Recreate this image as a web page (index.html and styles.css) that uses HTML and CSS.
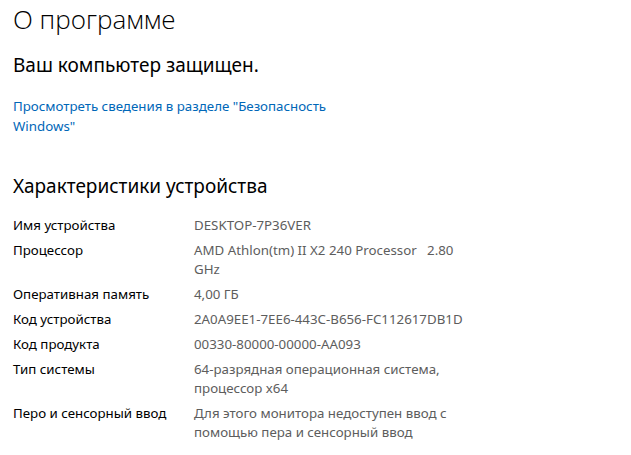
FILE: index.html
```html
<!DOCTYPE html>
<html lang="ru">
<head>
    <meta charset="UTF-8">
    <title>О программе</title>
    <link rel="stylesheet" href="styles.css">
</head>
<body>
    <div class="page">
        <h1>О программе</h1>
        <p class="status">Ваш компьютер защищен.</p>
        <a class="link" href="#">Просмотреть сведения в разделе "Безопасность Windows"</a>

        <h2>Характеристики устройства</h2>
        <dl class="specs">
            <dt>Имя устройства</dt>
            <dd>DESKTOP-7P36VER</dd>
            <dt>Процессор</dt>
            <dd>AMD Athlon(tm) II X2 240 Processor&nbsp;&nbsp;&nbsp;2.80 GHz</dd>
            <dt>Оперативная память</dt>
            <dd>4,00 ГБ</dd>
            <dt>Код устройства</dt>
            <dd class="nowrap">2A0A9EE1-7EE6-443C-B656-FC112617DB1D</dd>
            <dt>Код продукта</dt>
            <dd>00330-80000-00000-AA093</dd>
            <dt>Тип системы</dt>
            <dd>64-разрядная операционная система, процессор x64</dd>
            <dt>Перо и сенсорный ввод</dt>
            <dd>Для этого монитора недоступен ввод с помощью пера и сенсорный ввод</dd>
        </dl>
    </div>
</body>
</html>
```

FILE: styles.css
```css
/* Base */
body {
    font-family: "Noto Sans", "Open Sans", sans-serif;
    background-color: #ffffff;
    color: #000000;
    margin: 0;
    padding: 0;
}

.page {
    padding: 0 13px;
}

/* Headings */
h1 {
    font-family: "Open Sans", "Noto Sans", sans-serif;
    font-size: 26px;
    font-weight: 300;
    line-height: 36px;
    margin: 1px 0 0 0;
}

.status {
    font-size: 19px;
    line-height: 28px;
    margin: 14px 0 0 0;
}

.link {
    display: block;
    width: 320px;
    font-size: 13.3px;
    line-height: 20px;
    color: #0067b8;
    text-decoration: none;
    margin-top: 17px;
}

h2 {
    font-size: 19px;
    font-weight: 400;
    line-height: 28px;
    margin: 36px 0 0 0;
}

/* Spec list */
.specs {
    display: grid;
    grid-template-columns: 181px 272px;
    row-gap: 6px;
    margin: 16px 0 0 0;
    font-size: 13.3px;
    line-height: 19px;
}

.specs dt {
    color: #000000;
}

.specs dd {
    margin: 0;
    color: #5d5d5d;
}

.specs .nowrap {
    white-space: nowrap;
}
```
